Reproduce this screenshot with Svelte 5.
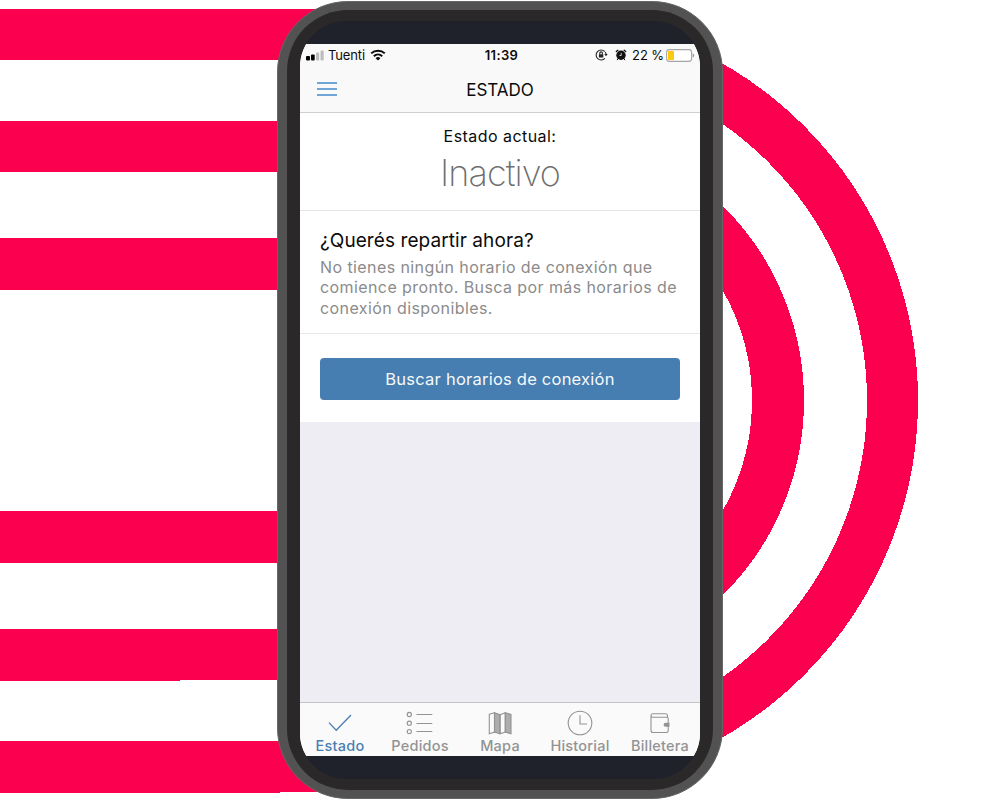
<script>
  const stripes = [
    'M0 9H330V60H0Z',
    'M0 121H290V172H0Z',
    'M0 238H290V290H0Z',
    'M0 511H290V563H0Z',
    'M0 629H290V680H180V681H0Z',
    'M0 741H330V792H280V793H0Z'
  ];
  const tabs = [
    { id: 'estado', label: 'Estado' },
    { id: 'pedidos', label: 'Pedidos' },
    { id: 'mapa', label: 'Mapa' },
    { id: 'historial', label: 'Historial' },
    { id: 'billetera', label: 'Billetera' }
  ];
  let active = $state('estado');
</script>

<div class="stage">
  <svg class="backdrop" width="1000" height="800" viewBox="0 0 1000 800" aria-hidden="true" shape-rendering="crispEdges">
    {#each stripes as d}
      <path {d} fill="#fc0050" />
    {/each}
    <circle cx="530" cy="400.5" r="362.5" fill="none" stroke="#fc0050" stroke-width="51" clip-path="url(#right)" />
    <circle cx="530" cy="400.5" r="248" fill="none" stroke="#fc0050" stroke-width="52" clip-path="url(#right)" />
    <clipPath id="right"><rect x="700" y="0" width="300" height="800" /></clipPath>
  </svg>

  <div class="phone">
    <div class="bezel">
      <div class="glass">
        <div class="screen">
          <div class="status">
            <div class="left">
              <svg width="18" height="11" viewBox="0 0 18 11">
                <rect x="0" y="6" width="4" height="4.5" rx="1" />
                <rect x="5" y="4.5" width="3.7" height="6" rx="1" />
                <rect x="10" y="2.5" width="3.2" height="8" rx="1" fill="#bdbdbf" />
                <rect x="14.5" y="0.5" width="3.2" height="10" rx="1" fill="#bdbdbf" />
              </svg>
              <span class="carrier">Tuenti</span>
              <svg class="wifi" width="16" height="12" viewBox="0 0 16 12" fill="none" stroke="#0b0b0b" stroke-width="2">
                <path d="M1.2 4.4C5 0.7 11 0.7 14.8 4.4" />
                <path d="M3.8 7.2C6.2 5 9.8 5 12.2 7.2" />
                <path d="M5.6 9.2Q8 7 10.4 9.2L8 11.5Z" fill="#0b0b0b" stroke="none" />
              </svg>
            </div>
            <time>11:39</time>
            <div class="right">
              <svg width="13" height="12" viewBox="0 0 13 12" fill="none" stroke="#222" stroke-width="1.1">
                <path d="M9.7 2.5A5 5 0 1 0 9.9 9.3M10.2 3Q11.1 4.2 11.1 5.5" />
                <path d="M9.3 5.1H12.7L11 7.3Z" fill="#222" stroke="none" />
                <rect x="3.9" y="5.3" width="4.4" height="3.2" fill="#222" stroke="none" />
                <path d="M4.8 5.5V4.2a1.3 1.3 0 0 1 2.6 0v1.3" />
              </svg>
              <svg class="alarm" width="12" height="12" viewBox="0 0 12 12">
                <circle cx="6" cy="6.3" r="4.7" fill="#111" />
                <path d="M1.3 2.6L2.8 1.3M10.7 2.6L9.2 1.3" stroke="#111" stroke-width="1.3" stroke-linecap="round" />
                <path d="M3 9.6L2.3 10.8M9 9.6L9.7 10.8" stroke="#111" stroke-width="1" stroke-linecap="round" />
                <path d="M6.2 3.9V6.5H4.5" fill="none" stroke="#f9f9f9" stroke-width="0.8" />
              </svg>
              <span class="percent">22 %</span>
              <svg width="29" height="13" viewBox="0 0 29 13">
                <rect x="0.6" y="0.6" width="25" height="11.8" rx="2.8" fill="#fff" stroke="#a5a5a7" stroke-width="1.1" />
                <rect x="2" y="2" width="6" height="9" rx="0.8" fill="#fdc90e" />
                <path d="M26.7 4.3Q28.2 5 28.2 6.5T26.7 8.7Z" fill="#9a9a9c" />
              </svg>
            </div>
          </div>

          <header>
            <button class="menu" aria-label="Menú">
              <svg width="20" height="16" viewBox="0 0 20 16">
                <path d="M0 2H20M0 8H20M0 14H20" fill="none" stroke="#4389cc" stroke-width="1.4" />
              </svg>
            </button>
            <h1>ESTADO</h1>
          </header>

          <section class="current">
            <p>Estado actual:</p>
            <strong>Inactivo</strong>
          </section>

          <section class="prompt">
            <h2>¿Querés repartir ahora?</h2>
            <p class="l1">No tienes ningún horario de conexión que</p>
            <p class="l2">comience pronto. Busca por más horarios de</p>
            <p class="l3">conexión disponibles.</p>
          </section>

          <section class="action">
            <button class="cta">Buscar horarios de conexión</button>
          </section>

          <main></main>

          <nav>
            {#each tabs as tab}
              <button class="tab {tab.id}" class:active={active === tab.id} onclick={() => (active = tab.id)}>
                <svg width="30" height="26" viewBox="0 0 30 26" fill="none" stroke="currentColor" stroke-width="1.1">
                  {#if tab.id === 'estado'}
                    <path d="M4 12.6L11.2 20.3L26 5" stroke-width="1.3" />
                  {:else if tab.id === 'pedidos'}
                    <circle cx="4.3" cy="4.5" r="2.1" /><circle cx="4.3" cy="13.2" r="2.1" /><circle cx="4.3" cy="21.6" r="2.1" />
                    <path d="M11.5 4.5H27.3M11.5 13.5H27.3M11.5 21.5H27.3" />
                  {:else if tab.id === 'mapa'}
                    <path d="M4.3 4.2L9.5 2.7V22L4.3 23.7Z" />
                    <path d="M9.5 2.7L15 4.7V23.7L9.5 22Z" fill="currentColor" fill-opacity=".75" />
                    <path d="M15 4.7L20.3 2.7V22L15 23.7Z" />
                    <path d="M20.3 2.7L26 4.4V23.7L20.3 22Z" fill="currentColor" fill-opacity=".75" />
                  {:else if tab.id === 'historial'}
                    <circle cx="15" cy="13" r="11.8" />
                    <path d="M15 5.2V14H22" />
                  {:else}
                    <path d="M6 6V20.5Q6 22.5 8 22.5H21.5Q23.2 22.5 23.2 20.8V8.7Q23.2 7.2 21.5 7.2H7.5Q6 7.2 6 5.5Q6 3.7 8 3.7H20.5Q22.5 3.7 22.5 5.5V7.2" />
                    <path d="M20.5 12.7H24.5V16.8H20.5Q18.6 16.8 18.6 14.75T20.5 12.7Z" fill="currentColor" stroke="none" />
                  {/if}
                </svg>
                <span>{tab.label}</span>
              </button>
            {/each}
          </nav>
        </div>
      </div>
    </div>
  </div>
</div>

<style>
  :global(body) { margin: 0; background: #fff; }
  * { box-sizing: border-box; }
  .stage {
    position: relative;
    width: 1000px;
    height: 800px;
    overflow: hidden;
    display: flex;
    justify-content: center;
    align-items: center;
    font-family: Inter, Roboto, sans-serif;
    color: #0b0b0b;
  }
  .backdrop { position: absolute; inset: 0; }
  .phone {
    position: relative;
    width: 446px;
    height: 798px;
    padding: 8px 9px;
    border: 1px solid #666;
    border-radius: 71px;
    background: #525252;
  }
  .bezel {
    height: 100%;
    padding: 11px 13px;
    border-radius: 61px;
    background: #2b2829;
  }
  .glass {
    height: 100%;
    padding: 23px 0;
    border-radius: 46px;
    background: #1f222b;
    overflow: hidden;
  }
  .screen { display: flex; flex-direction: column; height: 712px; background: #fff; }
  p, h1, h2 { margin: 0; font-weight: 400; white-space: nowrap; }
  button { border: 0; padding: 0; background: none; font: inherit; color: inherit; white-space: nowrap; }
  svg { display: block; flex: none; }

  .status {
    display: grid;
    grid-template-columns: 1fr auto 1fr;
    align-items: center;
    height: 22px;
    padding: 0 5px 0 6px;
    background: #f9f9f9;
    font-size: 13px;
    line-height: 16px;
    flex: none;
  }
  .left, .right { display: flex; align-items: center; }
  .right { justify-content: flex-end; }
  .carrier { margin-left: 4px; letter-spacing: -0.15px; }
  .wifi { margin-left: 5px; }
  time { font-weight: 600; font-size: 13px; letter-spacing: 0.35px; padding-left: 2px; }
  .alarm { margin: 0 5px 0 7px; }
  .percent { margin-right: 2px; font-size: 13px; letter-spacing: -0.1px; }

  header {
    display: grid;
    grid-template-columns: 60px 1fr 60px;
    align-items: center;
    height: 47px;
    flex: none;
    background: #f9f9f9;
    border-bottom: 1px solid #cfcfd1;
  }
  .menu { padding-left: 17px; }
  h1 { font-size: 17px; text-align: center; padding-top: 1px; }

  .current {
    height: 98px;
    flex: none;
    padding-top: 13px;
    text-align: center;
    border-bottom: 1px solid #e4e4e6;
  }
  .current p { font-size: 16px; line-height: 20px; letter-spacing: 0.45px; }
  .current strong {
    display: block;
    margin-top: 5px;
    font-size: 36px;
    line-height: 44px;
    font-weight: 200;
    letter-spacing: -0.9px;
    color: #6e6e6e;
  }

  .prompt {
    height: 123px;
    flex: none;
    padding: 17px 20px 0;
    border-bottom: 1px solid #e8e8ea;
  }
  h2 { font-size: 19px; line-height: 25px; letter-spacing: 0.08px; }
  .prompt p { font-size: 16px; line-height: 20.5px; color: #8b8b8b; letter-spacing: 0.41px; }
  .prompt .l1 { padding-top: 4px; line-height: 20px; }

  .action { height: 88px; flex: none; padding: 24px 20px 0; }
  .cta {
    display: block;
    width: 100%;
    height: 42px;
    border-radius: 4px;
    background: #477eb1;
    color: #f5f9fc;
    font-size: 16.5px;
    letter-spacing: 0.23px;
  }
  main { flex: 1; background: #eeedf3; }

  nav {
    display: grid;
    grid-template-columns: repeat(5, 80px);
    height: 54px;
    flex: none;
    background: #fafafa;
    border-top: 1px solid #c4c4c8;
  }
  .tab {
    display: flex;
    flex-direction: column;
    align-items: center;
    padding-top: 7px;
    color: #939393;
    font-size: 14.5px;
    line-height: 19px;
    font-weight: 500;
    letter-spacing: 0.22px;
  }
  .tab svg { margin-right: 1px; }
  .tab.active { color: #4a7fb3; }
</style>
